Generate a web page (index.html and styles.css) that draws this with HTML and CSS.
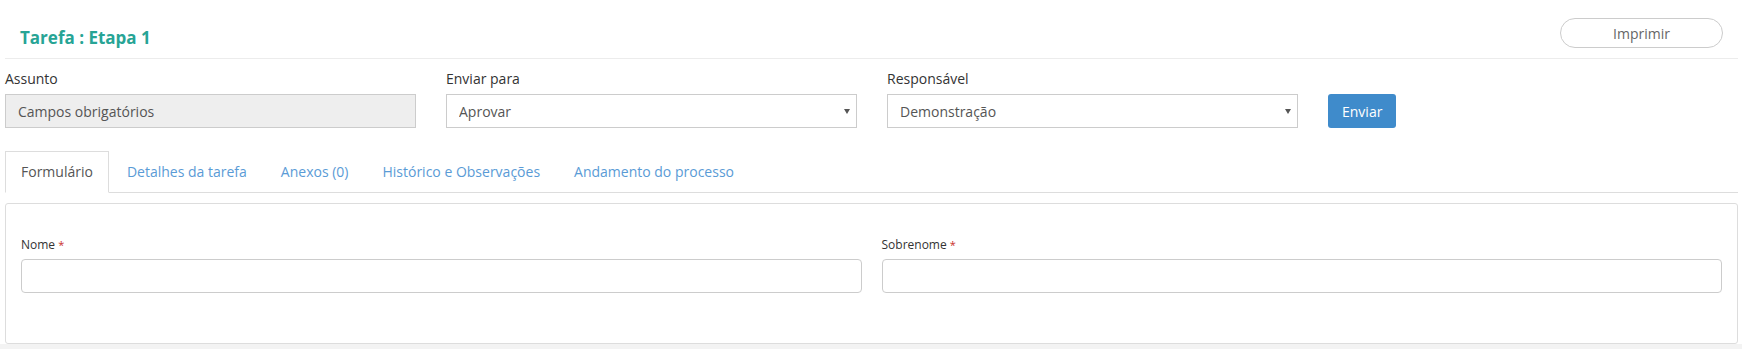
FILE: index.html
```html
<!DOCTYPE html>
<html lang="pt-BR">
<head>
    <meta charset="UTF-8">
    <meta name="viewport" content="width=device-width, initial-scale=1.0">
    <title>Tarefa : Etapa 1</title>
    <link rel="stylesheet" href="styles.css">
</head>
<body>
    <div class="page">
        <div class="task-header">
            <h1 class="task-title">Tarefa : Etapa 1</h1>
            <button class="btn-print">Imprimir</button>
        </div>

        <div class="send-row">
            <div class="field">
                <label class="field-label">Assunto</label>
                <input type="text" class="field-input readonly" value="Campos obrigatórios" readonly>
            </div>
            <div class="field">
                <label class="field-label">Enviar para</label>
                <div class="select-wrap">
                    <select class="field-input">
                        <option>Aprovar</option>
                    </select>
                </div>
            </div>
            <div class="field">
                <label class="field-label">Responsável</label>
                <div class="select-wrap">
                    <select class="field-input">
                        <option>Demonstração</option>
                    </select>
                </div>
            </div>
            <button class="btn-send">Enviar</button>
        </div>

        <ul class="tabs">
            <li class="tab active"><a href="#">Formulário</a></li>
            <li class="tab"><a href="#">Detalhes da tarefa</a></li>
            <li class="tab"><a href="#">Anexos (0)</a></li>
            <li class="tab"><a href="#">Histórico e Observações</a></li>
            <li class="tab"><a href="#">Andamento do processo</a></li>
        </ul>

        <div class="tab-panel">
            <div class="form-grid">
                <div class="form-group">
                    <label class="form-label">Nome <span class="required">*</span></label>
                    <input type="text" class="form-input">
                </div>
                <div class="form-group">
                    <label class="form-label">Sobrenome <span class="required">*</span></label>
                    <input type="text" class="form-input">
                </div>
            </div>
        </div>
    </div>
</body>
</html>
```

FILE: styles.css
```css
html {
    background: #f3f3f3;
}

body {
    margin: 0;
    font-family: 'Open Sans', 'Liberation Sans', sans-serif;
    font-size: 14px;
    color: #333;
}

.page {
    background: #fff;
    padding: 0 4px 0 5px;
}

/* header */
.task-header {
    display: flex;
    justify-content: space-between;
    align-items: flex-start;
    padding: 18px 15px 9px 15px;
    border-bottom: 1px solid #ececec;
}

.task-title {
    margin: 9px 0 0 0;
    font-size: 17px;
    line-height: 22px;
    font-weight: 700;
    color: #27a495;
}

.btn-print {
    width: 163px;
    height: 30px;
    border: 1px solid #ccc;
    border-radius: 15px;
    background: #fff;
    color: #666;
    font-family: inherit;
    font-size: 14px;
    cursor: pointer;
}

/* send row */
.send-row {
    display: flex;
    align-items: flex-end;
    gap: 30px;
    margin-top: 10px;
}

.field {
    width: 411px;
}

.field-label {
    display: block;
    line-height: 20px;
    margin-bottom: 5px;
}

.field-input {
    display: block;
    box-sizing: border-box;
    width: 100%;
    height: 34px;
    padding: 0 12px;
    border: 1px solid #ccc;
    border-radius: 0;
    background: #fff;
    color: #555;
    font-family: inherit;
    font-size: 14px;
    outline: none;
    appearance: none;
    -webkit-appearance: none;
}

.field-input.readonly {
    background: #eee;
}

.select-wrap {
    position: relative;
}

.select-wrap:after {
    content: '';
    position: absolute;
    right: 7px;
    top: 15px;
    border-left: 3px solid transparent;
    border-right: 3px solid transparent;
    border-top: 5px solid #555;
    pointer-events: none;
}

.btn-send {
    height: 34px;
    padding: 0 14px;
    border: none;
    border-radius: 3px;
    background: #3f8bcb;
    color: #fff;
    font-family: inherit;
    font-size: 14px;
    cursor: pointer;
}

/* tabs */
.tabs {
    display: flex;
    list-style: none;
    margin: 23px 0 0 0;
    padding: 0;
    border-bottom: 1px solid #ddd;
}

.tab {
    margin: 0 2px -1px 0;
}

.tab a {
    display: block;
    padding: 10px 15px;
    line-height: 20px;
    border: 1px solid transparent;
    color: #5a9bd6;
    text-decoration: none;
}

.tab.active a {
    border-color: #ddd;
    border-bottom-color: #fff;
    background: #fff;
    color: #555;
}

/* panel */
.tab-panel {
    margin-top: 10px;
    padding: 32px 15px 50px 15px;
    border: 1px solid #ddd;
    border-radius: 3px;
}

.form-grid {
    display: grid;
    grid-template-columns: 1fr 1fr;
    gap: 20px;
}

.form-label {
    display: block;
    font-size: 12px;
    line-height: 17px;
    margin-bottom: 6px;
}

.required {
    color: #c9302c;
    font-size: 11px;
    vertical-align: top;
}

.form-input {
    display: block;
    box-sizing: border-box;
    width: 100%;
    height: 34px;
    border: 1px solid #ccc;
    border-radius: 4px;
    padding: 0 12px;
    outline: none;
}
```
